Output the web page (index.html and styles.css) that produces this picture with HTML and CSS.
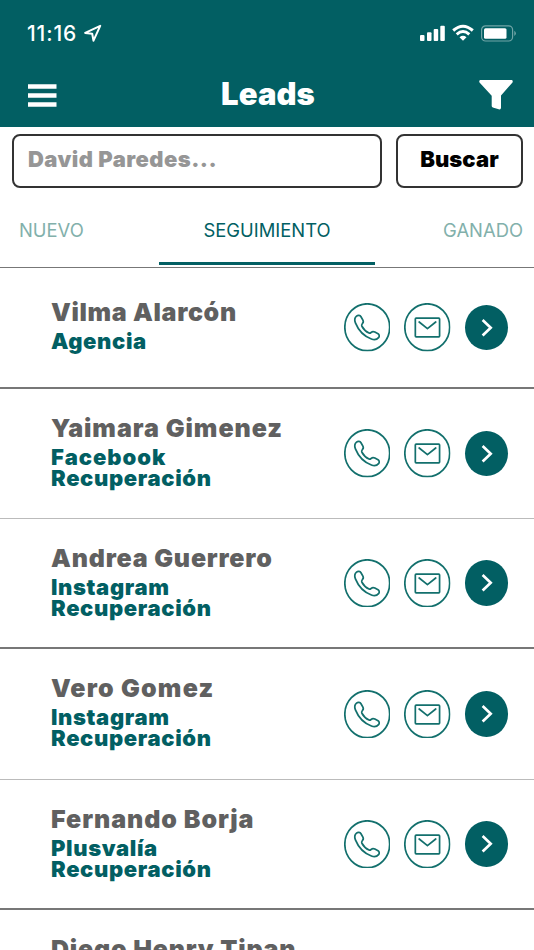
FILE: index.html
```html
<!DOCTYPE html>
<html lang="es">
<head>
<meta charset="utf-8">
<title>Leads</title>
<link rel="stylesheet" href="styles.css">
</head>
<body>
<svg class="defs" aria-hidden="true">
  <symbol id="phone" viewBox="0 0 46 48"><ellipse cx="23" cy="24" rx="22.2" ry="23.2"/><path d="M12.4 13C13.8 11.9 15.9 12.1 16.8 13.6L18.7 17C19.4 18.4 19 19.7 18.1 20.5C17.4 21.3 17.3 22.2 17.7 23C19.4 26.2 21.8 28.4 24.8 29.7C25.6 30.1 26.2 29.7 26.8 29.2C27.7 28.3 29.1 28 30.5 28.7L33.7 30.4C35 31.3 35.3 33 34.2 34.3C32.5 36.4 30 36.8 27.1 35.7C20.1 33 14.3 27.2 11.3 19.7C10.2 16.9 10.4 14.6 12.4 13Z"/></symbol>
  <symbol id="mail" viewBox="0 0 46 48"><ellipse cx="23" cy="24" rx="22.2" ry="23.2"/><rect x="11.2" y="15" width="24" height="18.5" rx=".8"/><path d="M15 18.8L23.2 25.4L31.4 18.8"/></symbol>
  <symbol id="next" viewBox="0 0 44 46"><path d="M17.8 15.2L26 23L17.8 30.8"/></symbol>
</svg>
<header class="header">
  <div class="status">
    <span class="time">11:16</span>
    <svg class="location" width="18" height="18" viewBox="0 0 18 18"><path d="M16.2 1.8L1.2 8.9L8.2 9.7L9.5 16.7Z"/></svg>
    <svg class="signals" width="98" height="18" viewBox="0 0 98 18">
      <rect x="1" y="11" width="4.5" height="6" rx="1"/><rect x="8" y="8.3" width="4.5" height="8.7" rx="1"/><rect x="14.7" y="5" width="4.5" height="12" rx="1"/><rect x="21.3" y="1.7" width="4.5" height="15.3" rx="1"/>
      <path class="wave" d="M34.2 6.5Q44 -2 53.8 6.5M37.7 10.3Q44 4.8 50.3 10.3"/><path d="M40.5 13.2Q44 10.3 47.5 13.2L44 16.8Z"/>
      <rect class="battery" x="62.6" y="1.8" width="31" height="15.2" rx="4"/><rect x="65" y="4.2" width="22.5" height="10.5" rx="1.5"/><path class="cap" d="M95.3 6.8Q98.5 9.4 95.3 12Z"/>
    </svg>
  </div>
  <div class="bar">
    <svg class="menu" width="30" height="24" viewBox="0 0 30 24"><path d="M1 3.5H29.5M1 12.5H29.5M1 21.5H29.5"/></svg>
    <h1 class="title">Leads</h1>
    <svg class="filter" width="34" height="30" viewBox="0 0 34 30"><path d="M1.2 0H32.8Q34.3 .6 33.5 2.4L22 15.4V27.6Q22 30 19.7 29.3L13.8 27.4Q12.7 27 12.7 26V15.8L.5 2.4Q-.3.6 1.2 0Z"/></svg>
  </div>
</header>
<form class="search">
  <input class="field" type="text" placeholder="David Paredes..." aria-label="Buscar lead">
  <button class="submit" type="button"><span>Buscar</span></button>
</form>
<nav class="tabs">
  <span class="tab">NUEVO</span><span class="tab active">SEGUIMIENTO</span><span class="tab last">GANADO</span>
</nav>
<main>
  <article class="lead short">
    <div class="info"><h2 class="name">Vilma Alarcón</h2><p class="source">Agencia</p></div>
    <div class="actions"><svg class="ring"><use href="#phone"/></svg><svg class="ring"><use href="#mail"/></svg><svg class="go"><use href="#next"/></svg></div>
  </article>
  <article class="lead light">
    <div class="info"><h2 class="name wide">Yaimara Gimenez</h2><p class="source facebook">Facebook</p><p class="source">Recuperación</p></div>
    <div class="actions"><svg class="ring"><use href="#phone"/></svg><svg class="ring"><use href="#mail"/></svg><svg class="go"><use href="#next"/></svg></div>
  </article>
  <article class="lead">
    <div class="info"><h2 class="name medium">Andrea Guerrero</h2><p class="source">Instagram</p><p class="source">Recuperación</p></div>
    <div class="actions"><svg class="ring"><use href="#phone"/></svg><svg class="ring"><use href="#mail"/></svg><svg class="go"><use href="#next"/></svg></div>
  </article>
  <article class="lead light">
    <div class="info"><h2 class="name widest">Vero Gomez</h2><p class="source">Instagram</p><p class="source">Recuperación</p></div>
    <div class="actions"><svg class="ring"><use href="#phone"/></svg><svg class="ring"><use href="#mail"/></svg><svg class="go"><use href="#next"/></svg></div>
  </article>
  <article class="lead">
    <div class="info"><h2 class="name wide">Fernando Borja</h2><p class="source">Plusvalía</p><p class="source">Recuperación</p></div>
    <div class="actions"><svg class="ring"><use href="#phone"/></svg><svg class="ring"><use href="#mail"/></svg><svg class="go"><use href="#next"/></svg></div>
  </article>
  <article class="lead">
    <div class="info"><h2 class="name medium">Diego Henry Tipan</h2></div>
  </article>
</main>
</body>
</html>
```
FILE: styles.css
```css
* { box-sizing: border-box; }
html, body { margin: 0; height: 950px; overflow: hidden; }
body { display: flex; flex-direction: column; background: #fff; font-family: Inter, sans-serif; color: #025f63; }
h1, h2, p { margin: 0; }
.defs { display: none; }
.header { flex: none; height: 127px; background: #025f63; color: #fff; }
.status { display: flex; height: 68px; padding: 24px 17px 0 27px; }
.time { width: 55px; font-size: 21px; line-height: 20px; font-weight: 500; letter-spacing: .9px; white-space: nowrap; }
.location { margin-left: 2px; fill: none; stroke: #fff; stroke-width: 2; stroke-linejoin: round; }
.signals { margin-left: auto; fill: #fff; }
.wave { fill: none; stroke: #fff; stroke-width: 3; }
.battery { fill: none; stroke: #71a5a7; stroke-width: 1.2; }
.cap { fill: #71a5a7; }
.bar { display: flex; justify-content: space-between; padding: 12px 21px 0 27px; }
.menu { margin-top: 3px; stroke: #fff; stroke-width: 4.3; }
.title { font-size: 31px; line-height: 28px; font-weight: 900; letter-spacing: .1px; }
.filter { fill: #fff; }
.search { flex: none; display: flex; gap: 14px; height: 61px; padding: 7px 11px 0 12px; }
.field, .submit { height: 54px; border: 2px solid #333; border-radius: 8px; background: #fff; font-family: inherit; font-weight: 900; font-size: 22px; }
.field { width: 370px; padding: 0 14px 4px; letter-spacing: .45px; }
.field::placeholder { color: #969696; opacity: 1; }
.submit { width: 127px; padding: 0 0 4px; color: #000; letter-spacing: .1px; }
.tabs { flex: none; display: flex; height: 80px; border-bottom: 1px solid #777; font-size: 18.4px; line-height: 85px; }
.tab { width: 159px; padding-left: 19px; color: #82b0ab; }
.active { width: 216px; padding: 0; text-align: center; color: #025f63; border-bottom: 3px solid #025f63; height: 77px; }
.last { padding: 0 11px 0 0; text-align: right; }
main { flex: 1; min-height: 0; overflow: hidden; }
.lead { display: flex; justify-content: space-between; height: 130.4px; padding: 0 26px 0 51px; border-bottom: 2px solid #777; }
.short { height: 120.6px; }
.light { border-bottom: 1px solid #bbb; }
.info { padding-top: 24px; white-space: nowrap; }
.short .info { padding-top: 29px; }
.name { height: 34px; font-size: 25px; line-height: 30px; font-weight: 900; letter-spacing: .65px; color: #606060; }
.medium { letter-spacing: .8px; }
.wide { letter-spacing: .95px; }
.widest { letter-spacing: 1.2px; }
.source { font-size: 22px; line-height: 21px; font-weight: 900; letter-spacing: .65px; }
.facebook { letter-spacing: 1px; }
.actions { display: flex; align-items: center; gap: 14px; }
.ring { width: 46.5px; height: 48.5px; fill: none; stroke: #13706d; stroke-width: 1.7; stroke-linejoin: round; stroke-linecap: round; }
.go { width: 43.5px; height: 45.5px; border-radius: 50%; background: #025f63; fill: none; stroke: #fff; stroke-width: 2.7; }
```
